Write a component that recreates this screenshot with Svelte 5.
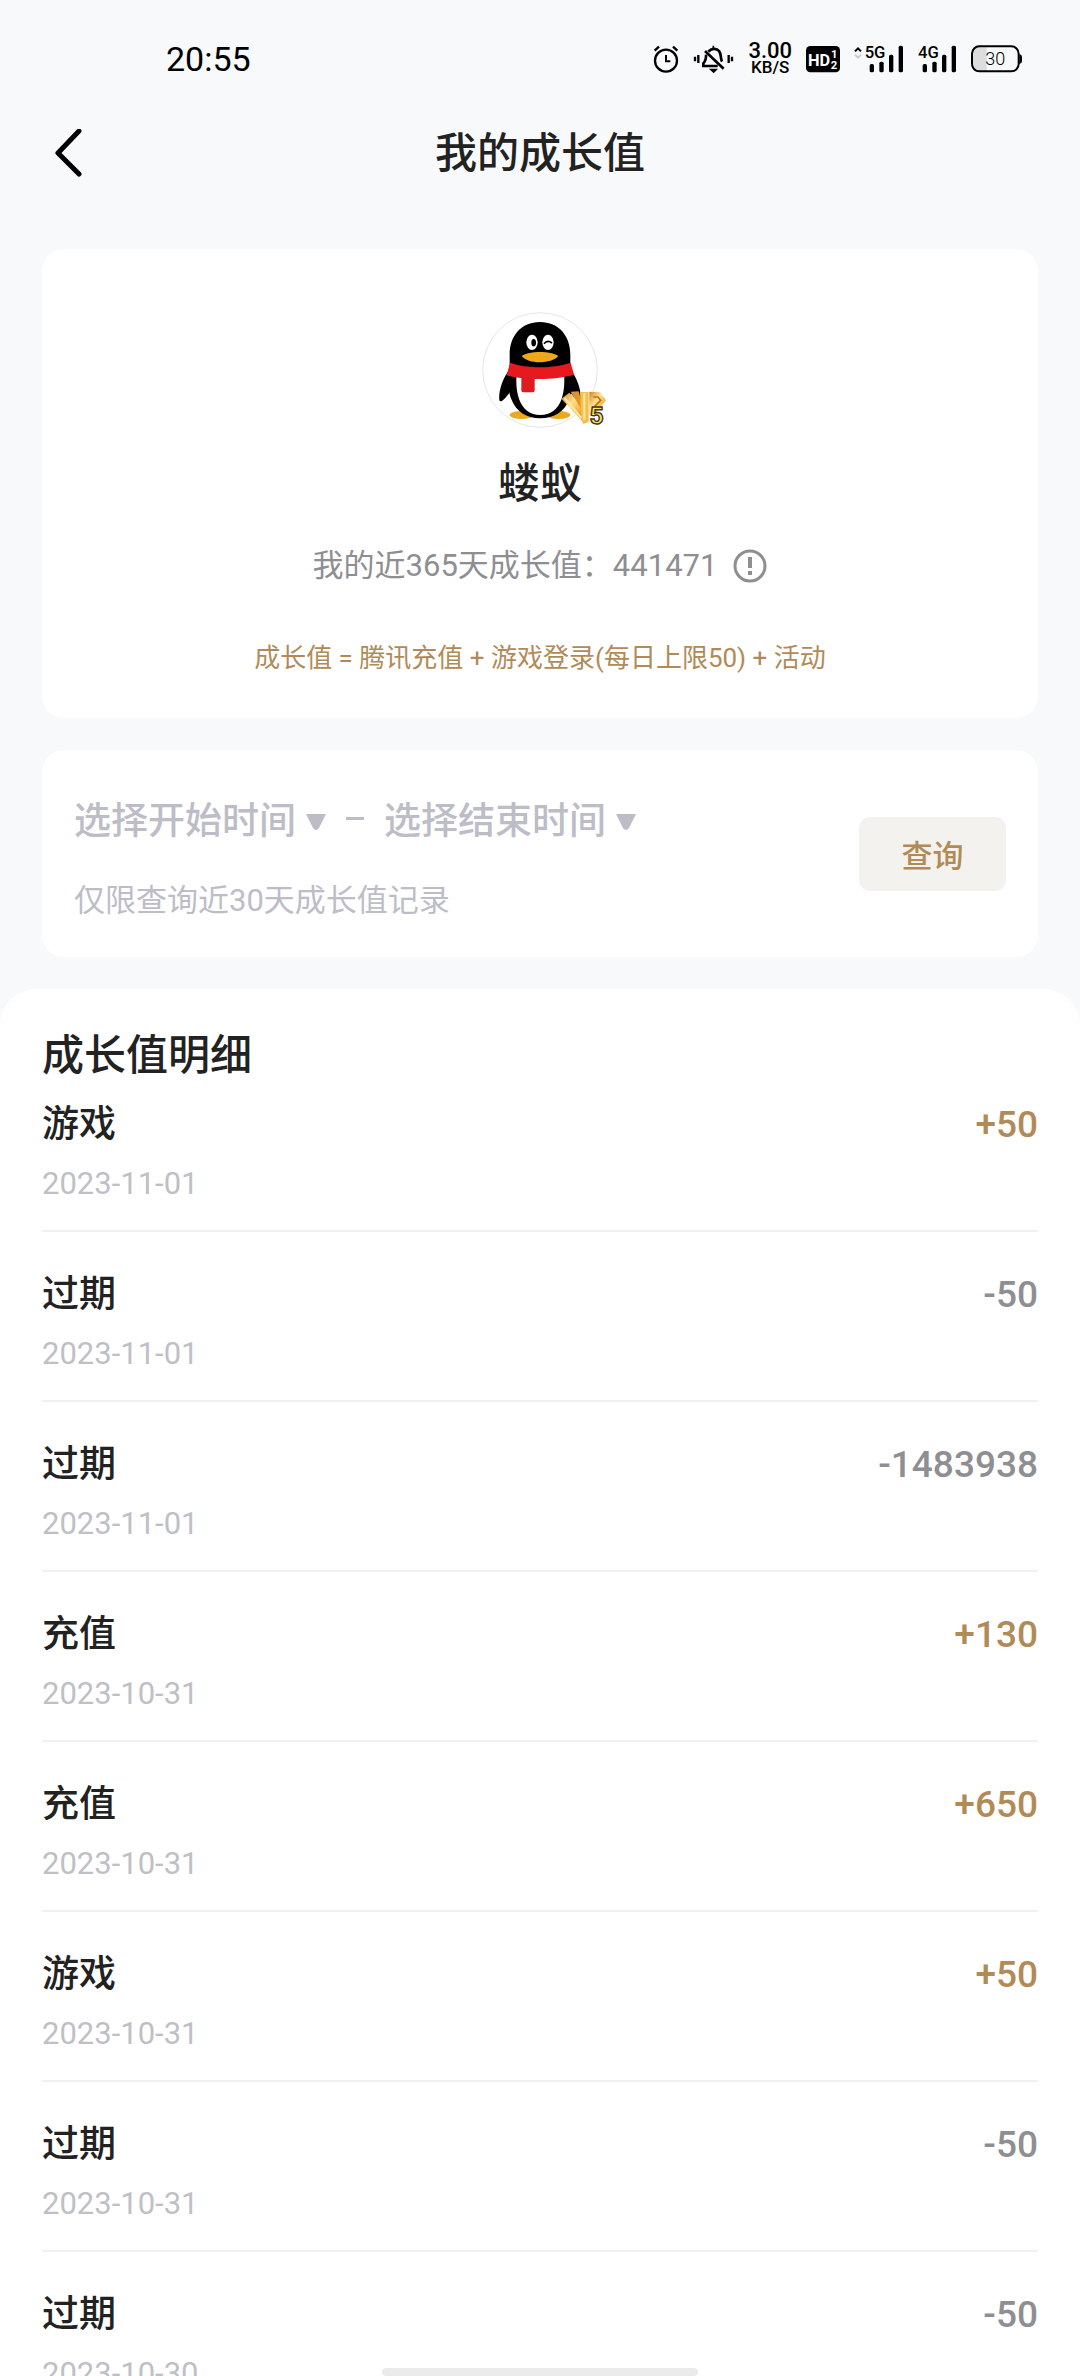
<script>
    let startDate = '选择开始时间';
    let endDate = '选择结束时间';

    const records = [
        { type: '游戏', date: '2023-11-01', amount: '+50' },
        { type: '过期', date: '2023-11-01', amount: '-50' },
        { type: '过期', date: '2023-11-01', amount: '-1483938' },
        { type: '充值', date: '2023-10-31', amount: '+130' },
        { type: '充值', date: '2023-10-31', amount: '+650' },
        { type: '游戏', date: '2023-10-31', amount: '+50' },
        { type: '过期', date: '2023-10-31', amount: '-50' },
        { type: '过期', date: '2023-10-30', amount: '-50' }
    ];
</script>

<div class="page">
    <div class="status">
        <span class="clock">20:55</span>
        <div class="status-icons">
            <!-- alarm -->
            <svg width="26" height="30" viewBox="72 72 78 90" fill="none" stroke="#000" stroke-width="7">
                <circle cx="111" cy="122" r="33" />
                <path d="M111 105v19h13" stroke-width="6" />
                <path d="M77 92l13-12M132 80l13 12" />
            </svg>
            <!-- vibrate, muted -->
            <svg width="41" height="30" viewBox="192 72 123 90" fill="none" stroke="#000" stroke-width="8">
                <path d="M198 110v14M208 105v24M299 105v24M309 110v14" stroke-width="7" />
                <path d="M238 95c8-10 24-12 32-2 7 8 4 22 9 32M231 104c1 14-2 20-8 26v8h43" />
                <path d="M228 93l56 53" />
                <path d="M253 77v10M246 149h15l-7 7z" stroke-width="5" />
            </svg>
            <span class="speed"><b>3.00</b><small>KB/S</small></span>
            <svg width="34" height="30" viewBox="525 72 102 90">
                <rect x="525" y="78" width="102" height="79" rx="13" />
                <text class="bold" x="531" y="137" font-size="49" fill="#fff">HD</text>
                <text class="bold" x="600" y="113" font-size="34" fill="#fff">1</text>
                <text class="bold" x="599" y="146" font-size="34" fill="#fff">2</text>
            </svg>
            <svg width="50" height="30" viewBox="666 72 150 90">
                <path d="M669 94l9-9 9 9" fill="none" stroke="#000" stroke-width="6" />
                <path d="M669 104l9 9 9-9" fill="none" stroke="#ccc" stroke-width="6" />
                <text class="medium" x="698" y="115" font-size="50">5G</text>
                <rect x="713" y="132" width="13" height="25" rx="5" />
                <rect x="742" y="125" width="13" height="32" rx="5" />
                <rect x="771" y="104" width="13" height="53" rx="5" />
                <rect x="800" y="77" width="13" height="80" rx="5" />
            </svg>
            <svg width="39" height="30" viewBox="861 72 117 90">
                <text class="medium" x="861" y="115" font-size="50">4G</text>
                <rect x="875" y="132" width="13" height="25" rx="5" />
                <rect x="904" y="125" width="13" height="32" rx="5" />
                <rect x="933" y="104" width="13" height="53" rx="5" />
                <rect x="962" y="77" width="13" height="80" rx="5" />
            </svg>
            <svg width="51" height="30" viewBox="1020 72 153 90">
                <path d="M1043 82h24v71h-24q-18 0-18-18v-35q0-18 18-18z" fill="#ddd" />
                <rect x="1023" y="79" width="140" height="75" rx="22" fill="none" stroke="#000" stroke-width="6" />
                <path d="M1165 102q8 2 8 9v12q0 7-8 9z" />
                <text class="light" x="1093" y="135" font-size="54" text-anchor="middle">30</text>
            </svg>
        </div>
    </div>

    <header class="nav">
        <button class="back" aria-label="返回">
            <svg width="30" height="50" viewBox="0 0 30 50" fill="none" stroke="#000" stroke-width="5" stroke-linecap="round" stroke-linejoin="round">
                <path d="M27 2L6 24l21 21" />
            </svg>
        </button>
        <h1>我的成长值</h1>
    </header>

    <main>
        <section class="card profile">
            <svg class="avatar" width="116" height="116" viewBox="66 65 348 348">
                <defs>
                    <linearGradient id="gold" x1="0" y1="0" x2="1" y2="1">
                        <stop offset="0" stop-color="#c9852a" />
                        <stop offset="0.4" stop-color="#ffe08a" />
                        <stop offset="0.7" stop-color="#f0b23c" />
                        <stop offset="1" stop-color="#b8731f" />
                    </linearGradient>
                </defs>
                <circle cx="240" cy="239" r="172" fill="#fff" stroke="#e6e6e6" stroke-width="3" />
                <ellipse cx="185" cy="374" rx="36" ry="12" fill="#efa81b" />
                <ellipse cx="295" cy="374" rx="36" ry="12" fill="#efa81b" />
                <path d="M147 240c-20 26-32 64-29 90 4 10 18-6 30-22zM333 240c20 26 32 64 29 90-4 10-18-6-30-22z" />
                <path d="M240 95c-57 0-91 42-91 98v44c-6 34-6 66 6 92 14 34 44 55 86 55s72-21 86-55c12-26 12-58 4-92v-44c0-56-34-98-91-98z" />
                <path d="M170 240h142c2 32 2 62-8 88-10 28-33 46-63 46s-53-18-63-46c-10-26-10-56-8-88z" fill="#fff" />
                <path d="M150 217c50 18 130 18 182 0l10 36c-54 16-142 18-202 2z" fill="#e6191e" />
                <path d="M184 256h40v44q0 6-6 6h-28q-6 0-6-6z" fill="#dd1b20" />
                <ellipse cx="216" cy="156" rx="17" ry="23" fill="#fff" />
                <ellipse cx="264" cy="156" rx="17" ry="23" fill="#fff" />
                <ellipse cx="221" cy="157" rx="7" ry="11" />
                <path d="M252 160q10-12 24-2" fill="none" stroke="#000" stroke-width="5" />
                <path d="M185 197c24-16 86-16 110 0-20 24-90 26-110 0z" fill="#efa81b" />
                <!-- level badge -->
                <path d="M304 325l24-18 44 50v40z" fill="url(#gold)" />
                <path d="M332 304l24-1 12 44v16z" fill="#dd952c" />
                <path d="M360 305h26v90l-16 6-6-14z" fill="#f5bf4c" />
                <path d="M388 304l32 2 18 24-36 44h-14z" fill="url(#gold)" />
                <path d="M314 323l50 60M373 308v80" fill="none" stroke="#ffe9a6" stroke-width="6" />
                <path d="M400 320h14l8 10-18 18" fill="none" stroke="#b8731f" stroke-width="5" />
                <text class="bold" x="410" y="400" font-size="74" text-anchor="middle" fill="#ffe169" stroke="#3d3216" stroke-width="4">5</text>
            </svg>
            <h2>蝼蚁</h2>
            <p class="total">
                我的近365天成长值：441471
                <button class="info" aria-label="说明">
                    <svg width="34" height="34" viewBox="0 0 34 34" fill="none" stroke="currentColor">
                        <circle cx="17" cy="17" r="15" stroke-width="3" />
                        <path d="M17 8v11M17 22v4" stroke-width="4" />
                    </svg>
                </button>
            </p>
            <p class="formula">成长值 = 腾讯充值 + 游戏登录(每日上限50) + 活动</p>
        </section>

        <section class="card query">
            <div class="filters">
                <div class="range">
                    <button class="picker">
                        {startDate}
                        <svg width="20" height="16" viewBox="0 0 20 16"><path d="M0 0h20l-7 14q-3 4-6 0z" fill="currentColor" /></svg>
                    </button>
                    <span class="dash"></span>
                    <button class="picker">
                        {endDate}
                        <svg width="20" height="16" viewBox="0 0 20 16"><path d="M0 0h20l-7 14q-3 4-6 0z" fill="currentColor" /></svg>
                    </button>
                </div>
                <p class="hint">仅限查询近30天成长值记录</p>
            </div>
            <button class="search">查询</button>
        </section>
    </main>

    <section class="detail">
        <h2>成长值明细</h2>
        <ul>
            {#each records as record}
                <li>
                    <div>
                        <div class="type">{record.type}</div>
                        <div class="date">{record.date}</div>
                    </div>
                    <span class="amount" class:plus={record.amount.startsWith('+')}>{record.amount}</span>
                </li>
            {/each}
        </ul>
    </section>
    <div class="home-bar"></div>
</div>

<style>
    :global(body) {
        background-color: #f8f9fb;
    }

    .page {
        height: 100vh;
        overflow: hidden;
        display: flex;
        flex-direction: column;
        font-family: Roboto, "Noto Sans CJK SC", sans-serif;
        color: #222;
    }

    h1, h2, p, ul {
        margin: 0;
        padding: 0;
    }

    h1, h2 {
        font-size: 42px;
        line-height: 60px;
        font-weight: 500;
    }

    button {
        border: none;
        padding: 0;
        background: none;
        font-family: inherit;
        color: inherit;
        cursor: pointer;
    }

    svg {
        display: block;
        flex-shrink: 0;
    }

    .status {
        display: flex;
        align-items: center;
        justify-content: space-between;
        height: 118px;
        flex-shrink: 0;
        padding: 0 58px 0 166px;
        color: #000;
    }

    .clock {
        font-size: 34px;
    }

    .status-icons {
        display: flex;
        align-items: center;
        gap: 14px;
    }

    .speed {
        display: flex;
        flex-direction: column;
        align-items: center;
        line-height: 16px;
    }

    .speed b {
        font-size: 22px;
        font-weight: 500;
    }

    .speed small {
        font-size: 17px;
        font-weight: 500;
    }

    .bold {
        font-weight: 700;
    }

    .medium {
        font-weight: 500;
    }

    .light {
        font-weight: 300;
    }

    .nav {
        display: grid;
        grid-template-columns: 1fr auto 1fr;
        align-items: center;
        height: 72px;
        flex-shrink: 0;
        padding: 0 52px;
    }

    .back {
        justify-self: start;
    }

    main {
        display: flex;
        flex-direction: column;
        gap: 32px;
        padding: 59px 42px 32px;
    }

    .card {
        background-color: #fff;
        border-radius: 22px;
    }

    .profile {
        display: flex;
        flex-direction: column;
        align-items: center;
        padding: 63px 32px 40px;
    }

    .avatar {
        overflow: visible;
        margin-bottom: 26px;
    }

    .total {
        display: flex;
        align-items: center;
        gap: 16px;
        margin: 30px 0 50px;
        font-size: 31px;
        line-height: 44px;
        color: #8e8e93;
    }

    .formula {
        font-size: 26px;
        line-height: 40px;
        color: #b08b57;
    }

    .query {
        display: flex;
        align-items: center;
        justify-content: space-between;
        padding: 0 32px;
        color: #bdbdc8;
    }

    .filters {
        padding: 46px 0 34px;
    }

    .range {
        display: flex;
        align-items: center;
    }

    .picker {
        display: flex;
        align-items: center;
        gap: 10px;
        font-size: 37px;
        line-height: 52px;
        font-weight: 500;
    }

    .dash {
        width: 18px;
        height: 3px;
        margin: 0 20px 8px;
        background-color: #bdbdc8;
    }

    .hint {
        margin-top: 31px;
        font-size: 31px;
        line-height: 44px;
    }

    .search {
        width: 147px;
        height: 74px;
        border-radius: 11px;
        background-color: #f4f2ef;
        color: #b08b57;
        font-size: 31px;
        font-weight: 500;
    }

    .detail {
        flex: 1;
        padding: 37px 42px 0;
        border-radius: 36px 36px 0 0;
        background-color: #fff;
    }

    .detail h2 {
        margin-bottom: 13px;
    }

    li {
        display: flex;
        justify-content: space-between;
        padding: 37px 0 24px;
        border-bottom: 2px solid #f0f0f0;
    }

    li:first-child {
        padding-top: 0;
    }

    .type, .amount {
        font-size: 37px;
        line-height: 52px;
        font-weight: 500;
    }

    .date {
        margin-top: 11px;
        font-size: 31px;
        line-height: 44px;
        color: #bfbfc6;
    }

    .amount {
        color: #8e8e93;
    }

    .plus {
        color: #b08b57;
    }

    .home-bar {
        position: fixed;
        bottom: 0;
        left: 50%;
        width: 316px;
        height: 8px;
        margin-left: -158px;
        border-radius: 4px;
        background-color: #ebebeb;
    }
</style>
